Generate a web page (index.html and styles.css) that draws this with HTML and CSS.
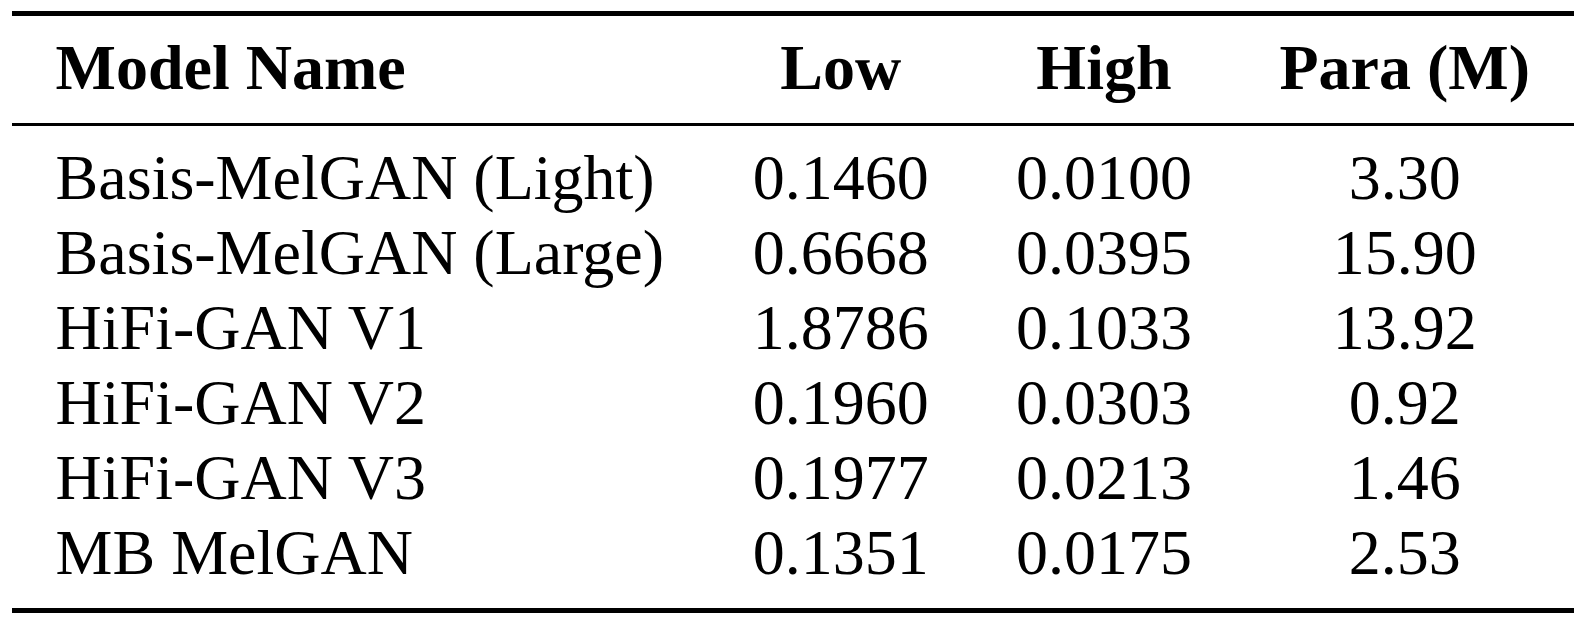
FILE: index.html
```html
<!DOCTYPE html>
<html lang="en">
<head>
<meta charset="utf-8">
<title>Vocoder comparison</title>
<link rel="stylesheet" href="styles.css">
</head>
<body>
<div class="table">
  <div class="row head">
    <div class="cell name">Model Name</div>
    <div class="cell">Low</div>
    <div class="cell">High</div>
    <div class="cell">Para (M)</div>
  </div>
  <div class="body">
    <div class="row">
      <div class="cell name">Basis-MelGAN (Light)</div>
      <div class="cell">0.1460</div>
      <div class="cell">0.0100</div>
      <div class="cell">3.30</div>
    </div>
    <div class="row">
      <div class="cell name">Basis-MelGAN (Large)</div>
      <div class="cell">0.6668</div>
      <div class="cell">0.0395</div>
      <div class="cell">15.90</div>
    </div>
    <div class="row">
      <div class="cell name">HiFi-GAN V1</div>
      <div class="cell">1.8786</div>
      <div class="cell">0.1033</div>
      <div class="cell">13.92</div>
    </div>
    <div class="row">
      <div class="cell name">HiFi-GAN V2</div>
      <div class="cell">0.1960</div>
      <div class="cell">0.0303</div>
      <div class="cell">0.92</div>
    </div>
    <div class="row">
      <div class="cell name">HiFi-GAN V3</div>
      <div class="cell">0.1977</div>
      <div class="cell">0.0213</div>
      <div class="cell">1.46</div>
    </div>
    <div class="row">
      <div class="cell name">MB MelGAN</div>
      <div class="cell">0.1351</div>
      <div class="cell">0.0175</div>
      <div class="cell">2.53</div>
    </div>
  </div>
</div>
</body>
</html>
```
FILE: styles.css
```css
html, body {
  margin: 0;
  padding: 0;
  background: #fff;
}

.table {
  margin: 11px 0 0 12px;
  width: 1562px;
  border-top: 5px solid #000;
  border-bottom: 5px solid #000;
  font-family: "Liberation Serif", "Times New Roman", serif;
  font-size: 64px;
  line-height: 75px;
  color: #000;
}

.row {
  display: grid;
  grid-template-columns: 697px 263.3px 263.3px 338.4px;
}

.cell {
  text-align: center;
  white-space: nowrap;
}

.cell.name {
  text-align: left;
  padding-left: 43.6px;
}

.head {
  font-weight: bold;
  padding: 14px 0 18px;
  border-bottom: 3px solid #000;
}

.body {
  padding: 14px 0 18px;
}
```
